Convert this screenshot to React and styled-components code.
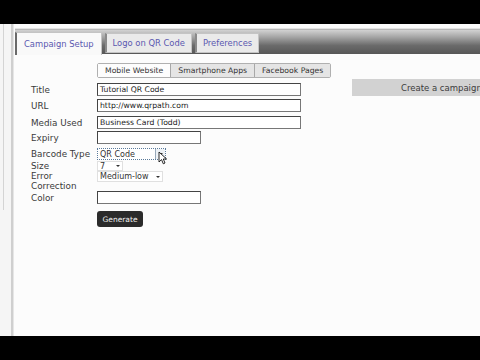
import React from "react";
import styled, { createGlobalStyle } from "styled-components";

const Global = createGlobalStyle`
  html, body { margin: 0; padding: 0; background: #000; }
  body { font-family: "DejaVu Sans", Verdana, sans-serif; }
`;

const Screen = styled.div`
  width: 480px;
  height: 360px;
  display: flex;
  flex-direction: column;
  overflow: hidden;
  background: #000;
`;

const Letterbox = styled.div`
  height: 24px;
  flex: none;
  background: #000;
`;

const Main = styled.div`
  flex: 1;
  display: flex;
  background: #f5f5f5;
  min-height: 0;
`;

const Sidebar = styled.div`
  width: 11px;
  flex: none;
  display: flex;
`;

const Rail = styled.div`
  margin-left: 3px;
  width: 0;
  height: 186px;
  border-left: 1px solid #d4d4d4;
`;

const Panel = styled.div`
  flex: 1;
  border-left: 2px solid #cfcfcf;
  box-shadow: inset 1px 0 0 #e6e6e6;
  background: #fcfcfc;
  padding-top: 5px;
  padding-left: 2px;
  display: flex;
  flex-direction: column;
`;

const TabBar = styled.div`
  display: flex;
  align-items: flex-end;
  height: 24px;
  border-top: 1px solid #b8b8b8;
  box-shadow: 0 -1px 0 #e4e4e4;
  background: linear-gradient(to bottom, #d2d2d2 0%, #a4a4a4 30%, #6a6a6a 65%, #575757 100%);
  gap: 3px;
`;

const Tab = styled.div`
  height: ${(p) => (p.$active ? "23px" : "20px")};
  margin-bottom: ${(p) => (p.$active ? "-1px" : "1px")};
  box-sizing: border-box;
  padding: 0 ${(p) => (p.$active ? "7px" : "6px")};
  display: flex;
  align-items: center;
  font-size: 8.4px;
  color: #5a58b0;
  background: ${(p) => (p.$active ? "#f9f9f9" : "#eaeaea")};
  border: 1px solid #c4c4c4;
  border-left: ${(p) => (p.$active ? "2px solid #6a6a6a" : "2px solid #8a8a8a")};
  border-bottom: ${(p) => (p.$active ? "none" : "1px solid #c4c4c4")};
  white-space: nowrap;
`;

const Body = styled.div`
  flex: 1;
  display: flex;
`;

const FormColumn = styled.div`
  width: 334px;
  flex: none;
  padding: 9px 0 0 15px;
  box-sizing: border-box;
`;

const SubTabs = styled.div`
  display: flex;
  margin-left: 67px;
  width: fit-content;
  border: 1px solid #b0b0b0;
  border-radius: 2px;
  margin-bottom: 5px;
`;

const SubTab = styled.div`
  height: 13px;
  padding: 0 7px;
  display: flex;
  align-items: center;
  font-size: 7.7px;
  color: #333;
  background: ${(p) => (p.$active ? "#fdfdfd" : "#e5e5e5")};
  border-left: ${(p) => (p.$first ? "none" : "1px solid #a8a8a8")};
  white-space: nowrap;
`;

const Row = styled.div`
  display: flex;
  align-items: ${(p) => (p.$top ? "flex-start" : "center")};
  margin-top: ${(p) => p.$mt || 0}px;
  position: relative;
`;

const Label = styled.div`
  width: 67px;
  flex: none;
  font-size: 8.8px;
  line-height: 10px;
  color: #3a3a3a;
  padding-left: 1px;
  box-sizing: border-box;
`;

const TextBox = styled.div`
  width: ${(p) => p.$w}px;
  height: 13px;
  box-sizing: border-box;
  border: 1px solid #444;
  border-right-color: #777;
  border-bottom-color: #777;
  background: #fff;
  font-size: 7.7px;
  color: #222;
  padding-left: 2px;
  display: flex;
  align-items: center;
  white-space: nowrap;
`;

const Select = styled.div`
  width: ${(p) => p.$w}px;
  height: ${(p) => p.$h || 11}px;
  box-sizing: border-box;
  border: 1px solid ${(p) => (p.$focus ? "#5a7a9a" : "#e0e0e0")};
  border-style: ${(p) => (p.$focus ? "dotted" : "solid")};
  background: #fff;
  font-size: 8px;
  color: #333;
  display: flex;
  align-items: center;
  justify-content: space-between;
  padding-left: 2px;
  white-space: nowrap;
`;

const Arrow = styled.div`
  width: ${(p) => (p.$button ? "10px" : "9px")};
  height: 100%;
  display: flex;
  align-items: center;
  justify-content: center;
  box-sizing: border-box;
  border-left: ${(p) => (p.$button ? "1px solid #9ab" : "none")};
  background: ${(p) => (p.$button ? "#eef2f6" : "transparent")};
  &::after {
    content: "";
    border-left: 2px solid transparent;
    border-right: 2px solid transparent;
    border-top: 2px solid #333;
  }
`;

const Generate = styled.button`
  margin: 7px 0 0 67px;
  width: 46px;
  height: 16px;
  border: none;
  border-radius: 3px;
  background: #2b2b2b;
  color: #f2f2f2;
  font-family: "DejaVu Sans", Verdana, sans-serif;
  font-size: 7.5px;
  padding: 0;
  display: flex;
  align-items: center;
  justify-content: center;
`;

const SideColumn = styled.div`
  flex: 1;
  min-width: 0;
  padding-top: 25px;
  padding-left: 3px;
`;

const Banner = styled.div`
  height: 17px;
  background: #d2d2d2;
  font-size: 8.5px;
  color: #3c3c3c;
  display: flex;
  align-items: center;
  padding-left: 49px;
  white-space: nowrap;
  overflow: hidden;
`;

const Cursor = styled.svg`
  position: absolute;
  left: 128px;
  top: 3px;
  width: 10px;
  height: 14px;
`;

export default function App() {
  return (
    <>
      <Global />
      <Screen>
        <Letterbox />
        <Main>
          <Sidebar>
            <Rail />
          </Sidebar>
          <Panel>
            <TabBar>
              <Tab $active>Campaign Setup</Tab>
              <Tab>Logo on QR Code</Tab>
              <Tab>Preferences</Tab>
            </TabBar>
            <Body>
              <FormColumn>
                <SubTabs>
                  <SubTab $first $active>Mobile Website</SubTab>
                  <SubTab>Smartphone Apps</SubTab>
                  <SubTab>Facebook Pages</SubTab>
                </SubTabs>
                <Row>
                  <Label>Title</Label>
                  <TextBox $w={204}>Tutorial QR Code</TextBox>
                </Row>
                <Row $mt={3}>
                  <Label>URL</Label>
                  <TextBox $w={204}>http://www.qrpath.com</TextBox>
                </Row>
                <Row $mt={4}>
                  <Label>Media Used</Label>
                  <TextBox $w={204}>Business Card (Todd)</TextBox>
                </Row>
                <Row $mt={2}>
                  <Label>Expiry</Label>
                  <TextBox $w={104}></TextBox>
                </Row>
                <Row $mt={4}>
                  <Label>Barcode Type</Label>
                  <Select $w={69} $h={12} $focus>
                    QR Code
                    <Arrow $button />
                  </Select>
                  <Cursor viewBox="0 0 10 14">
                    <path d="M1 1 L1 11 L3.5 8.6 L5.3 12.8 L7 12 L5.3 8 L8.6 8 Z" fill="#fff" stroke="#111" strokeWidth="0.9" strokeLinejoin="round" />
                  </Cursor>
                </Row>
                <Row $mt={1}>
                  <Label>Size</Label>
                  <Select $w={26} $h={10}>
                    7
                    <Arrow />
                  </Select>
                </Row>
                <Row $top>
                  <Label>Error Correction</Label>
                  <Select $w={66}>
                    Medium-low
                    <Arrow />
                  </Select>
                </Row>
                <Row>
                  <Label>Color</Label>
                  <TextBox $w={104}></TextBox>
                </Row>
                <Generate>Generate</Generate>
              </FormColumn>
              <SideColumn>
                <Banner>Create a campaign</Banner>
              </SideColumn>
            </Body>
          </Panel>
        </Main>
        <Letterbox />
      </Screen>
    </>
  );
}
